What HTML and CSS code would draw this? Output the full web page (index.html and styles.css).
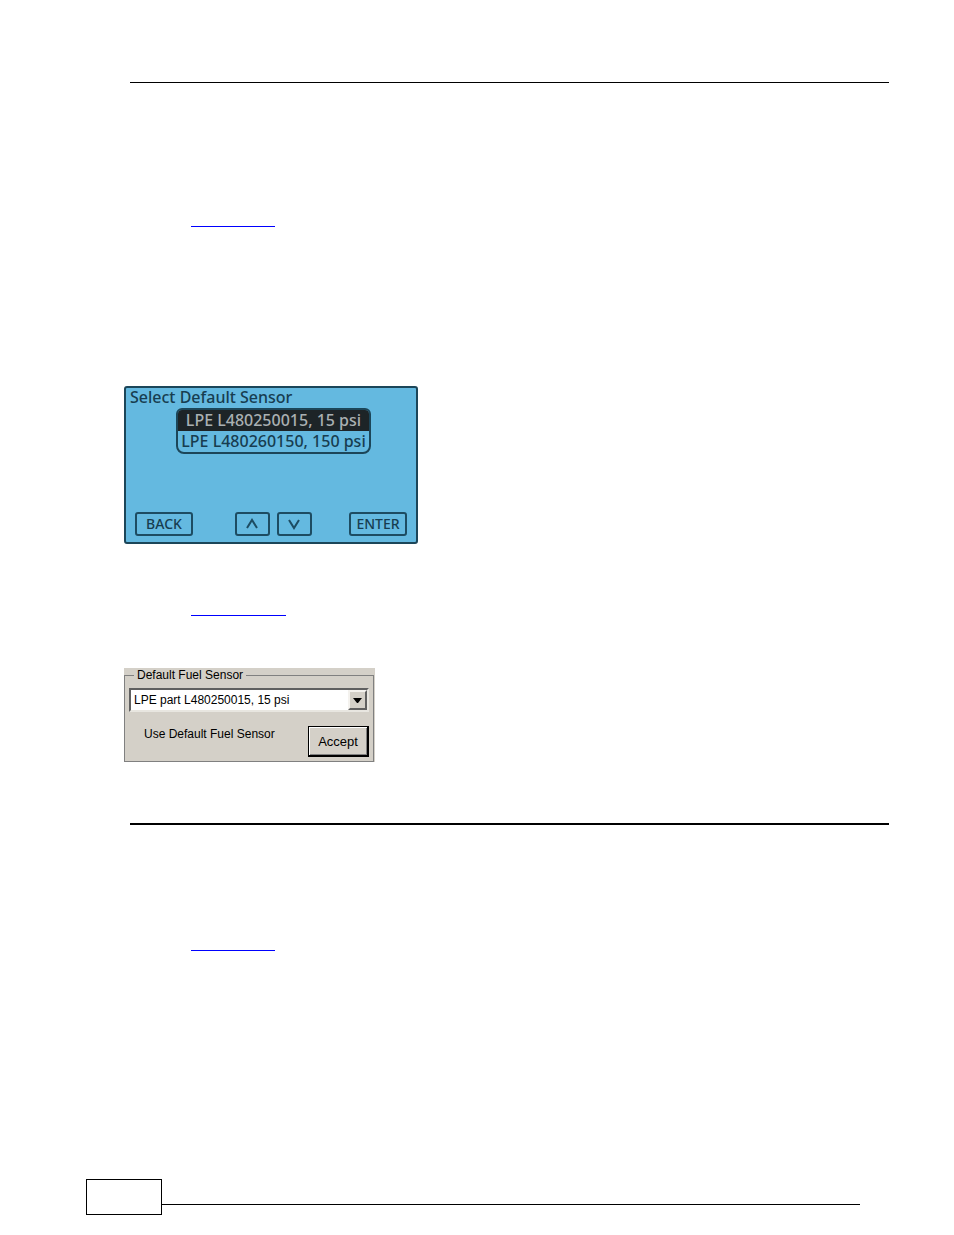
FILE: index.html
```
<!DOCTYPE html>
<html lang="en">
<head>
    <meta charset="UTF-8">
    <meta name="viewport" content="width=device-width, initial-scale=1.0">
    <title>Default Sensor</title>
    <link rel="stylesheet" href="styles.css">
</head>
<body>
    <main class="content">
        <hr class="rule">
        <a class="link" href="#display" aria-label="Display"></a>

        <section class="lcd" id="display">
            <h2 class="lcd-title">Select Default Sensor</h2>
            <ul class="lcd-list">
                <li class="active">LPE L480250015, 15 psi</li>
                <li>LPE L480260150, 150 psi</li>
            </ul>
            <div class="lcd-keys">
                <button class="key">BACK</button>
                <div class="arrows">
                    <button class="key arrow" aria-label="Up">
                        <svg width="12" height="12" viewBox="0 0 12 12"><path d="M1 10 L6 2 L11 10"/></svg>
                    </button>
                    <button class="key arrow" aria-label="Down">
                        <svg width="12" height="12" viewBox="0 0 12 12"><path d="M1 2 L6 10 L11 2"/></svg>
                    </button>
                </div>
                <button class="key">ENTER</button>
            </div>
        </section>

        <a class="link link-wide" href="#software" aria-label="Software"></a>

        <form class="panel" id="software">
            <fieldset class="group">
                <legend><label for="sensor">Default Fuel Sensor</label></legend>
                <div class="combo">
                    <select id="sensor">
                        <option>LPE part L480250015, 15 psi</option>
                    </select>
                    <span class="combo-arrow">
                        <svg width="9" height="5" viewBox="0 0 9 5"><path d="M0 0 H9 L5 5 H4 Z"/></svg>
                    </span>
                </div>
                <div class="accept-row">
                    <span>Use Default Fuel Sensor</span>
                    <button type="button" class="accept">Accept</button>
                </div>
            </fieldset>
        </form>

        <hr class="rule rule-thick">
        <a class="link" href="#display" aria-label="Display"></a>
    </main>
    <footer class="footer">
        <div class="page-box"></div>
        <div class="footer-line"></div>
    </footer>
</body>
</html>
```
FILE: styles.css
```
* {
    box-sizing: border-box;
}
body {
    margin: 0;
    min-height: 100vh;
    display: flex;
    flex-direction: column;
    background-color: white;
    font-family: "Liberation Sans", Arial, sans-serif;
}
.content {
    flex: 1;
    padding: 82px 65px 0 124px;
}
.rule {
    margin: 0 0 0 6px;
    border: none;
    border-top: 1px solid black;
}
.rule-thick {
    margin-top: 61px;
    border-top-width: 2px;
}
.link {
    display: block;
    width: 84px;
    height: 24px;
    margin: 120px 0 0 67px;
    border-bottom: 1px solid #0000ff;
}
.link-wide {
    width: 95px;
    margin-top: 48px;
}
.rule-thick + .link {
    margin-top: 102px;
}

/* device display */
.lcd {
    display: flex;
    flex-direction: column;
    width: 294px;
    height: 158px;
    margin-top: 159px;
    padding: 0 9px 6px 4px;
    background-color: #64b9e0;
    border: 2px solid #1c4659;
    border-radius: 3px;
    color: #173d50;
    font-family: "Noto Sans", "Open Sans", sans-serif;
    font-weight: 500;
}
.lcd-title {
    margin: 0;
    font-size: 16px;
    font-weight: 500;
    line-height: 18px;
}
.lcd-list {
    width: 195px;
    margin: 2px 0 0 46px;
    padding: 0;
    list-style: none;
    border: 2px solid #1c4659;
    border-radius: 6px 6px 8px 8px;
    font-size: 16px;
    line-height: 21px;
    text-align: center;
    white-space: nowrap;
}
.lcd-list .active {
    background-color: #1d2427;
    border-radius: 4px 4px 0 0;
    color: #a9b0b2;
}
.lcd-keys {
    display: flex;
    justify-content: space-between;
    margin-top: auto;
    padding-left: 5px;
}
.arrows {
    display: flex;
    gap: 7px;
    margin-left: 4px;
}
.key {
    width: 58px;
    height: 24px;
    padding: 0;
    background: none;
    border: 2px solid #1d4c62;
    border-radius: 3px;
    color: #173d50;
    font-family: inherit;
    font-size: 14px;
    font-weight: 500;
    line-height: 20px;
}
.arrow {
    display: flex;
    align-items: center;
    justify-content: center;
    width: 35px;
}
.arrow path {
    fill: none;
    stroke: #1d4c62;
    stroke-width: 2;
}

/* settings panel */
.panel {
    width: 251px;
    height: 94px;
    margin-top: 52px;
    padding-right: 1px;
    background-color: #d4d0c8;
    color: black;
    font-size: 12px;
}
.group {
    height: 94px;
    margin: 0;
    padding: 5px 4px 0 4px;
    border: 1px solid #808080;
}
.group legend {
    margin-left: 5px;
    padding: 0 3px;
    line-height: 15px;
}
.combo {
    display: flex;
    height: 24px;
    background-color: white;
    border: 2px solid;
    border-color: #606060 #e8e6e0 #e8e6e0 #606060;
}
.combo select {
    flex: 1;
    min-width: 0;
    padding: 0 3px;
    appearance: none;
    background: none;
    border: none;
    color: black;
    font-family: inherit;
    font-size: 12px;
}
.combo-arrow {
    display: flex;
    align-items: center;
    justify-content: center;
    width: 19px;
    background-color: #d4d0c8;
    border: 2px solid;
    border-color: #f4f2ee #606060 #606060 #f4f2ee;
}
.accept-row {
    display: flex;
    justify-content: space-between;
    margin-top: 14px;
    padding-left: 15px;
    line-height: 17px;
}
.accept {
    width: 61px;
    height: 31px;
    padding: 0;
    background-color: #d4d0c8;
    border: 1px solid black;
    border-width: 1px 2px 2px 1px;
    box-shadow: inset 1px 1px white, inset -1px -1px #808080;
    color: black;
    font-family: inherit;
    font-size: 13px;
}

.footer {
    display: flex;
    padding: 0 94px 20px 86px;
}
.page-box {
    width: 76px;
    height: 36px;
    border: 1px solid black;
}
.footer-line {
    flex: 1;
    margin-top: 25px;
    border-top: 1px solid black;
}
```
